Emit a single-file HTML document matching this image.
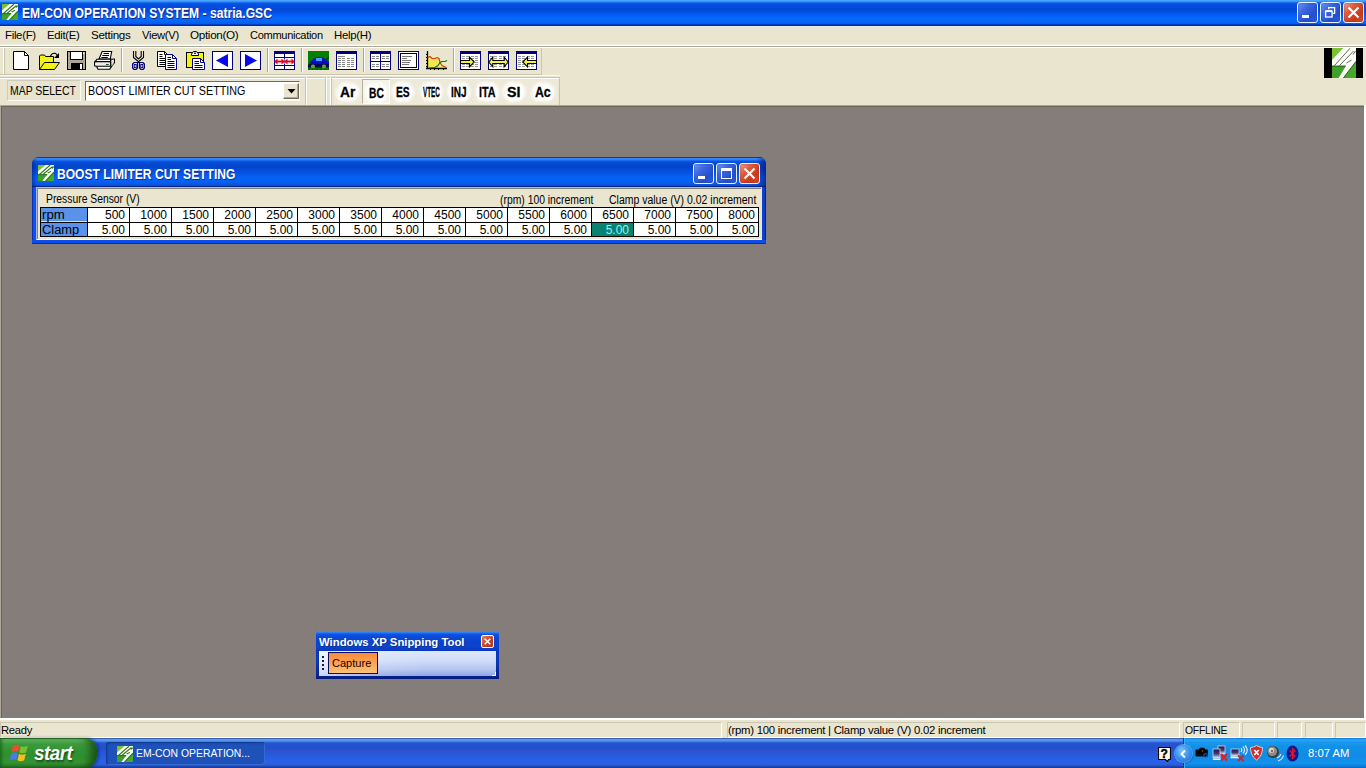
<!DOCTYPE html>
<html><head><meta charset="utf-8"><title>EM-CON OPERATION SYSTEM - satria.GSC</title>
<style>
*{box-sizing:border-box;margin:0;padding:0}
html,body{width:1366px;height:768px;overflow:hidden;background:#857d79;font-family:"Liberation Sans","DejaVu Sans",sans-serif;font-size:11px;color:#000}
div,span,svg{position:absolute}
span{white-space:nowrap;line-height:1;transform-origin:0 0}
.xpgrad{background:linear-gradient(to bottom,#4aa4ff 0.0%,#4aa4ff 3.8%,#2a82f6 7.7%,#0a5ae6 11.5%,#0452e2 15.4%,#034cdc 23.1%,#0349d9 38.5%,#0350e4 46.2%,#045cf4 57.7%,#0668fc 69.2%,#0766f8 80.8%,#0860ee 88.5%,#0858e0 92.3%,#0640c0 94.2%,#002e98 96.9%,#002e98 100.0%)}
#titlebar{left:0;top:0;width:1366px;height:26px}
.ttl{font-weight:bold;color:#fff;text-shadow:1px 1px 0 #0f2a8f}
.wbtn{width:21px;height:21px;border:1px solid #e4f4ff;border-radius:3px;background:linear-gradient(135deg,#6f97f5 0%,#3a66e0 35%,#2450cf 70%,#2c5cdc 100%);box-shadow:inset 0 0 2px rgba(20,40,140,.6)}
.wbtn.close{background:linear-gradient(135deg,#f0a088 0%,#e0593a 35%,#c93a18 70%,#d94d2c 100%);box-shadow:inset 0 0 2px rgba(120,30,10,.6)}
#menubar{left:0;top:26px;width:1366px;height:19px;background:#eae5cf;border-top:1px solid #e8eaf2}
#menubar span{top:3px;font-size:11px;letter-spacing:-0.3px}
#chrome{left:0;top:44px;width:1366px;height:61px;background:#eae5cf}
.hl{background:#fff} .sh{background:#aca899} .sh2{background:#c9c5b2}
#mdi{left:0;top:105px;width:1366px;height:613px;background:#857d79}
#status{left:0;top:718px;width:1366px;height:20px;background:#eae5cf;border-top:2px solid #fff}
.pane{top:2px;height:16px;border:1px solid;border-color:#c8c5b4 #fff #fff #c8c5b4}
#status span{font-size:11px;letter-spacing:-0.25px}
#taskbar{left:0;top:738px;width:1366px;height:30px;background:linear-gradient(to bottom,#3a62aa 0.0%,#3a62aa 3.3%,#5a98f4 4.0%,#5593f2 10.0%,#356ee0 13.3%,#2455cf 16.7%,#2450cb 30.0%,#2a4fcc 36.7%,#2856d6 46.7%,#295ce0 63.3%,#2a62e8 80.0%,#2a5edc 88.3%,#2650c4 93.3%,#1a3c9c 96.7%,#1a3c9c 100.0%)}
#tray{left:1183px;top:0;width:183px;height:30px;background:linear-gradient(to bottom,#0f70d8 0%,#29a8f5 6%,#1a98ee 14%,#1290e8 30%,#108ce6 60%,#1292ec 85%,#0e7cd6 95%,#0b68bf 100%);border-left:1px solid #0b3f9c;box-shadow:inset 1px 0 0 #3fb0f8}
#start{left:0;top:0;width:97px;height:30px;border-radius:0 12px 12px 0;background:linear-gradient(to bottom,#2c742c 0%,#2c742c 3%,#62bc62 5%,#52ae52 12%,#3d9c3d 20%,#339333 40%,#2f8f2f 60%,#359735 82%,#2f862f 92%,#256e25 100%);box-shadow:inset -8px 0 9px -2px rgba(15,60,15,.75),inset 3px 0 3px -1px rgba(15,70,15,.5),2px 0 3px rgba(10,30,120,.5)}
</style><style>.g12{font-size:12px}.r{text-align:right}</style></head><body>
<div id="titlebar" class="xpgrad"><svg style="left:2px;top:4px" width="16" height="16" viewBox="8 0 24 30" preserveAspectRatio="none"><rect x="8" y="0" width="24" height="30" fill="#44aa2a"/><path d="M8 0H19.300L8 11.700Z" fill="#78c236"/><path d="M8 18H22V30H8Z" fill="#3ea228"/><path d="M19.300 0H32V13.300L19.300 30H14.600L21.900 18H8V11.700Z" fill="#fdfff8"/><path d="M26 0.300L10.400 17.700M29.600 3L15.400 17.700M8 18H21.900M27.500 12L22.500 15M32 13.300L19.300 30M31.500 3L29 6.500" stroke="#2f7a1c" stroke-width="2" fill="none"/></svg><span class="ttl" id="maintitle" style="transform:scaleX(0.8670);left:21.5px;top:6px;font-size:14px">EM-CON OPERATION SYSTEM - satria.GSC</span><div class="wbtn" style="left:1297px;top:2px"><div style="left:4px;top:12px;width:7px;height:3px;background:#fff"></div></div><div class="wbtn" style="left:1320px;top:2px"><svg width="19" height="19" style="left:0;top:0"><path d="M7.7 6.3V4.6H13.6V10.300H11.800" stroke="#fff" stroke-width="1.300" fill="none"/><rect x="4.600" y="8.400" width="6.500" height="5.600" stroke="#fff" stroke-width="1.300" fill="none"/><path d="M4.600 8H11.100" stroke="#fff" stroke-width="1.800"/></svg></div><div class="wbtn close" style="left:1343px;top:2px"><svg width="19" height="19" style="left:0;top:0"><path d="M4.5 4.5L14.5 14.5M14.5 4.5L4.5 14.5" stroke="#fff" stroke-width="2.2" fill="none"/></svg></div></div>
<div id="menubar"><span style="left:5px;transform:scaleX(1.0380)">File(F)</span><span style="left:47px;transform:scaleX(1.0276)">Edit(E)</span><span style="left:91px;transform:scaleX(1.0573)">Settings</span><span style="left:142px;transform:scaleX(1.0188)">View(V)</span><span style="left:190px;transform:scaleX(1.0615)">Option(O)</span><span style="left:250px;transform:scaleX(1.0037)">Communication</span><span style="left:334px;transform:scaleX(1.0392)">Help(H)</span></div>
<div id="chrome"><div style="left:0;top:0;width:1366px;height:1px;background:#f1efe2"></div><div class="hl" style="left:0;top:1px;width:1366px;height:1px"></div><div class="sh" style="left:0;top:2px;width:1366px;height:1px"></div><div class="hl" style="left:0;top:3px;width:1366px;height:1px"></div><div class="sh2" style="left:0;top:30px;width:542px;height:1px"></div><div class="sh2" style="left:541px;top:4px;width:1px;height:27px"></div><div style="left:0;top:31px;width:560px;height:1px;background:#fbf9ee"></div><div class="sh2" style="left:0;top:33px;width:560px;height:1px"></div><div class="hl" style="left:0;top:34px;width:559px;height:1px"></div><div class="sh2" style="left:559px;top:33px;width:1px;height:28px"></div><div class="sh2" style="left:4px;top:4px;width:1px;height:26px"></div><div class="hl" style="left:3px;top:4px;width:1px;height:26px"></div><div class="sh2" style="left:305px;top:33px;width:1px;height:28px"></div><div class="hl" style="left:306px;top:33px;width:1px;height:28px"></div><div class="sh2" style="left:325px;top:33px;width:1px;height:28px"></div><div class="hl" style="left:326px;top:33px;width:1px;height:28px"></div><div class="hl" style="left:330px;top:33px;width:1px;height:28px"></div><div class="sh2" style="left:331px;top:33px;width:1px;height:28px"></div><div class="sh" style="left:121px;top:4px;width:1px;height:24px"></div><div class="hl" style="left:122px;top:4px;width:1px;height:24px"></div><div class="sh" style="left:267px;top:4px;width:1px;height:24px"></div><div class="hl" style="left:268px;top:4px;width:1px;height:24px"></div><div class="sh" style="left:301px;top:4px;width:1px;height:24px"></div><div class="hl" style="left:302px;top:4px;width:1px;height:24px"></div><div class="sh" style="left:363px;top:4px;width:1px;height:24px"></div><div class="hl" style="left:364px;top:4px;width:1px;height:24px"></div><div class="sh" style="left:453px;top:4px;width:1px;height:24px"></div><div class="hl" style="left:454px;top:4px;width:1px;height:24px"></div></div>
<div id="icons" style="left:0;top:0;width:0;height:0"><svg style="left:13px;top:51px" width="16" height="19" viewBox="0 0 16 19"><path d="M0.5 0.5H11.5L15.5 4.5V18.5H0.5Z" fill="#fff" stroke="#000"/><path d="M11.5 0.5V4.5H15.5" fill="none" stroke="#000"/></svg><svg style="left:39px;top:52px" width="21" height="18" viewBox="0 0 21 18"><path d="M0.5 17.5V4L1.5 3H5.5L6.5 4.5H14.5V10.5" fill="#f2f214" stroke="#000"/><path d="M0.5 17.5L5.5 10.5H20.5L15.5 17.5Z" fill="#f2f214" stroke="#000"/><path d="M11.5 4Q13 0.8 16 1.3Q18 2 18.5 4" fill="none" stroke="#000" stroke-width="1.2"/><path d="M20 1V6H15Z" fill="#000"/></svg><svg style="left:67px;top:51px" width="19" height="19" viewBox="0 0 19 19"><rect x="0.5" y="0.5" width="18" height="18" fill="#aca698" stroke="#000"/><rect x="3.5" y="0.5" width="12" height="8" fill="#fff" stroke="#000"/><rect x="16" y="1.5" width="1.5" height="1.5" fill="#fff"/><rect x="4" y="12" width="12" height="7" fill="#000"/><rect x="13" y="13" width="2" height="5" fill="#fff"/></svg><svg style="left:94px;top:51px" width="21" height="19" viewBox="0 0 21 19"><path d="M8.200 0.500H17.700L16.200 8H5Z" fill="#fff" stroke="#000" stroke-width="1.100"/><path d="M9.500 2.500H15M8.300 4.500H15M7.300 6.500H13.800" stroke="#000" fill="none"/><path d="M16.600 8.300L20.500 8V11.500L17.200 15.800L16.600 15.200Z" fill="#d8d8d0" stroke="#000" stroke-width="1.100"/><path d="M17.500 10.500L19.500 8.500M17.500 13L20 10M17.500 15L19.500 12.500" stroke="#fff" stroke-width="0.700"/><path d="M1 10.600L3 8.300H16.600V10.600Z" fill="#fff" stroke="#000" stroke-width="1.100"/><path d="M2.500 15.300L4 18.300H15.800L17.200 15.500" fill="#fff" stroke="#000" stroke-width="1.100"/><rect x="0.500" y="10.600" width="16.200" height="4.700" rx="1.300" fill="#ecece4" stroke="#000" stroke-width="1.100"/><path d="M12 13.500H14.700" stroke="#1c4c2c" stroke-width="1"/></svg><svg style="left:132px;top:51px" width="14" height="19" viewBox="0 0 14 19"><path d="M1.500 0V6.500L8 12M3.800 0V5.500L6.500 8M11.500 0V6.500L5 12M9.200 0V5.500L6.500 8" fill="none" stroke="#000" stroke-width="1.100"/><path d="M5.500 11.500H2L0.600 13V17L2 18.500H4L5.500 17ZM7.500 11.500H11L12.400 13V17L11 18.500H9L7.500 17Z" fill="none" stroke="#000080" stroke-width="1.200"/><rect x="2.200" y="13.500" width="2" height="3.200" fill="none" stroke="#000080" stroke-width="0.900"/><rect x="8.800" y="13.500" width="2" height="3.200" fill="none" stroke="#000080" stroke-width="0.900"/></svg><svg style="left:157px;top:51px" width="20" height="19" viewBox="0 0 20 19"><path d="M0.5 0.5H7.5L10.5 3.5V15.5H0.5Z" fill="#fff" stroke="#000"/><path d="M7.5 0.5V3.5H10.5" fill="none" stroke="#000"/><path d="M2.5 3.5H5.5M2.5 5.5H5.5M2.5 7.5H8M2.5 9.5H8M2.5 11.5H8M2.5 13.5H8" stroke="#000"/><path d="M8.5 3.5H15.5L19.5 7.5V18.5H8.5Z" fill="#fff" stroke="#000080"/><path d="M15.5 3.5V7.5H19.5" fill="none" stroke="#000080"/><path d="M10.5 6.5H14M10.5 8.5H14M10.5 10.5H17.5M10.5 12.5H17.5M10.5 14.5H17.5M10.5 16.5H17.5" stroke="#000"/></svg><svg style="left:186px;top:51px" width="19" height="19" viewBox="0 0 19 19"><rect x="0.5" y="1.5" width="17" height="15" fill="#f2f214" stroke="#000"/><path d="M5.5 4.5V3L7.5 0.5H10.5L12.5 3V4.5Z" fill="#fff" stroke="#000"/><rect x="8.2" y="1.6" width="1.6" height="1.4" fill="#000"/><path d="M6.5 7.5H14.5L18.5 11.5V18.5H6.5Z" fill="#fff" stroke="#000080"/><path d="M14.5 7.5V11.5H18.5" fill="none" stroke="#000080"/><path d="M8.5 10.5H13M8.5 12.5H13M8.5 14.5H16.5M8.5 16.5H16.5" stroke="#000080"/></svg><svg style="left:212px;top:51px" width="21" height="19" viewBox="0 0 21 19"><rect x="0.5" y="0.5" width="20" height="18" fill="#fff" stroke="#000080"/><path d="M4 9.5L16 3V16Z" fill="#0808f0"/></svg><svg style="left:240px;top:51px" width="21" height="19" viewBox="0 0 21 19"><rect x="0.5" y="0.5" width="20" height="18" fill="#fff" stroke="#000080"/><path d="M17 9.5L5 3V16Z" fill="#0808f0"/></svg><svg style="left:274px;top:51px" width="21" height="19" viewBox="0 0 21 19"><rect x="0.5" y="0.5" width="20" height="18" fill="#fff" stroke="#000080"/><rect x="0" y="0" width="21" height="3" fill="#000080"/><path d="M10.5 0V19M0 6.5H21M0 14.5H21" stroke="#000080"/><rect x="1" y="8" width="19" height="5" fill="#ffd8d0" opacity="0.600"/><path d="M0.500 10.500H20.500" stroke="#e00020" stroke-width="1.800"/><path d="M0.500 10.500L3.500 7.500V13.500ZM10.500 10.500L7.500 7.500V13.500ZM10.500 10.500L13.500 7.500V13.500ZM20.500 10.500L17.500 7.500V13.500Z" fill="#e00020"/></svg><svg style="left:308px;top:51px" width="21" height="19" viewBox="0 0 21 19"><rect width="21" height="19" fill="#008000"/><path d="M0 15L2 11Q5 7.500 8 6.500Q11 5 15 6.500Q18 8.500 21 11V16H0Z" fill="#0a0ac4"/><path d="M0 13H21V16.500H0Z" fill="#000a58"/><path d="M0 14.500L3 10" stroke="#005800" stroke-width="1" fill="none"/><path d="M18 9L21 6" stroke="#003000" stroke-width="1.200"/><rect x="8" y="7" width="6" height="3" fill="#36a6ff"/><circle cx="5" cy="15.500" r="2" fill="#86a636"/><circle cx="16" cy="15.500" r="2" fill="#86a636"/><circle cx="5" cy="15.500" r="0.800" fill="#607828"/><circle cx="16" cy="15.500" r="0.800" fill="#607828"/><path d="M0 18H21" stroke="#0a5a0a" stroke-width="1.500" stroke-dasharray="2 2"/></svg><svg style="left:336px;top:51px" width="21" height="19" viewBox="0 0 21 19"><rect x="0.5" y="0.5" width="20" height="18" fill="#fff" stroke="#000080"/><rect width="21" height="3" fill="#000080"/><rect x="2" y="5" width="7" height="1" fill="#888"/><rect x="2" y="7" width="3" height="1" fill="#888"/><rect x="6" y="7" width="3" height="1" fill="#888"/><rect x="11" y="7" width="3" height="1" fill="#888"/><rect x="15" y="7" width="3" height="1" fill="#888"/><rect x="2" y="9" width="3" height="1" fill="#888"/><rect x="6" y="9" width="3" height="1" fill="#888"/><rect x="11" y="9" width="3" height="1" fill="#888"/><rect x="15" y="9" width="3" height="1" fill="#888"/><rect x="2" y="11" width="3" height="1" fill="#888"/><rect x="6" y="11" width="3" height="1" fill="#888"/><rect x="11" y="11" width="3" height="1" fill="#888"/><rect x="15" y="11" width="3" height="1" fill="#888"/><rect x="2" y="13" width="3" height="1" fill="#888"/><rect x="6" y="13" width="3" height="1" fill="#888"/><rect x="11" y="13" width="3" height="1" fill="#888"/><rect x="15" y="13" width="3" height="1" fill="#888"/><rect x="2" y="15" width="3" height="1" fill="#888"/><rect x="6" y="15" width="3" height="1" fill="#888"/><rect x="11" y="15" width="3" height="1" fill="#888"/><rect x="15" y="15" width="3" height="1" fill="#888"/></svg><svg style="left:370px;top:51px" width="21" height="19" viewBox="0 0 21 19"><rect x="0.5" y="0.5" width="20" height="18" fill="#fff" stroke="#000080"/><rect width="21" height="3" fill="#000080"/><path d="M10.5 0V19M0 10.5H21" stroke="#000080"/><rect x="2" y="5" width="3" height="1" fill="#888"/><rect x="6" y="5" width="3" height="1" fill="#888"/><rect x="12" y="5" width="3" height="1" fill="#888"/><rect x="16" y="5" width="3" height="1" fill="#888"/><rect x="2" y="7" width="3" height="1" fill="#888"/><rect x="6" y="7" width="3" height="1" fill="#888"/><rect x="12" y="7" width="3" height="1" fill="#888"/><rect x="16" y="7" width="3" height="1" fill="#888"/><rect x="2" y="13" width="3" height="1" fill="#888"/><rect x="6" y="13" width="3" height="1" fill="#888"/><rect x="12" y="13" width="3" height="1" fill="#888"/><rect x="16" y="13" width="3" height="1" fill="#888"/><rect x="2" y="15" width="3" height="1" fill="#888"/><rect x="6" y="15" width="3" height="1" fill="#888"/><rect x="12" y="15" width="3" height="1" fill="#888"/><rect x="16" y="15" width="3" height="1" fill="#888"/></svg><svg style="left:398px;top:51px" width="21" height="19" viewBox="0 0 21 19"><rect x="0.5" y="0.5" width="20" height="18" fill="#fff" stroke="#000080"/><rect x="2.5" y="2.5" width="16" height="14" fill="#fff" stroke="#000"/><path d="M4 5.5H14M4 7.5H9M4 9.5H13M4 11.5H12M4 13.5H11" stroke="#777"/></svg><svg style="left:426px;top:51px" width="22" height="19" viewBox="0 0 22 19"><path d="M2 6L4 5L6 7H9L11 6L13 7L14 11L16 14L18 15L20 16V17.5H2Z" fill="#f4e440" opacity=".9"/><path d="M12 11L15 10H20V17H12Z" fill="#f8e8a0" opacity=".6"/><path d="M1.5 0V18M0 17.5H21" stroke="#000" stroke-width="1.3" fill="none"/><path d="M0 3.5H1.5M0 6.5H1.5M0 9.500H1.5M0 12.500H1.5M0 15.500H1.5M4.500 17.500V19M8.500 17.500V19M12.500 17.500V19M17.500 17.500V19" stroke="#000"/><path d="M1.500 6.500L4 5.500L6 7.500H9L11 6.500L13 7.500L14 11.500L16 14.500L18 15.500L20.500 16.500" fill="none" stroke="#e03010" stroke-width="1.1"/><path d="M3 17L9 16.500L12 14.500L14 11.500L16 10.500H19L21 9.500" fill="none" stroke="#107020" stroke-width="1.1"/></svg><svg style="left:460px;top:51px" width="21" height="19" viewBox="0 0 21 19"><rect x="0.5" y="0.5" width="20" height="18" fill="#fff" stroke="#000080"/><rect width="21" height="3" fill="#000080"/><rect x="2" y="5" width="3" height="1" fill="#999"/><rect x="6" y="5" width="3" height="1" fill="#999"/><rect x="11" y="5" width="3" height="1" fill="#999"/><rect x="15" y="5" width="3" height="1" fill="#999"/><rect x="2" y="7" width="3" height="1" fill="#999"/><rect x="6" y="7" width="3" height="1" fill="#999"/><rect x="11" y="7" width="3" height="1" fill="#999"/><rect x="15" y="7" width="3" height="1" fill="#999"/><rect x="2" y="9" width="3" height="1" fill="#999"/><rect x="6" y="9" width="3" height="1" fill="#999"/><rect x="11" y="9" width="3" height="1" fill="#999"/><rect x="15" y="9" width="3" height="1" fill="#999"/><rect x="2" y="11" width="3" height="1" fill="#999"/><rect x="6" y="11" width="3" height="1" fill="#999"/><rect x="11" y="11" width="3" height="1" fill="#999"/><rect x="15" y="11" width="3" height="1" fill="#999"/><rect x="2" y="13" width="3" height="1" fill="#999"/><rect x="6" y="13" width="3" height="1" fill="#999"/><rect x="11" y="13" width="3" height="1" fill="#999"/><rect x="15" y="13" width="3" height="1" fill="#999"/><rect x="2" y="15" width="3" height="1" fill="#999"/><rect x="6" y="15" width="3" height="1" fill="#999"/><rect x="11" y="15" width="3" height="1" fill="#999"/><rect x="15" y="15" width="3" height="1" fill="#999"/><path d="M0.500 9.500H9.500V6.200L14.200 11L9.500 15.800V12.500H0.500Z" fill="#f2f24a" stroke="#000" stroke-width="1.100"/></svg><svg style="left:488px;top:51px" width="21" height="19" viewBox="0 0 21 19"><rect x="0.5" y="0.5" width="20" height="18" fill="#fff" stroke="#000080"/><rect width="21" height="3" fill="#000080"/><rect x="2" y="5" width="3" height="1" fill="#999"/><rect x="6" y="5" width="3" height="1" fill="#999"/><rect x="11" y="5" width="3" height="1" fill="#999"/><rect x="15" y="5" width="3" height="1" fill="#999"/><rect x="2" y="7" width="3" height="1" fill="#999"/><rect x="6" y="7" width="3" height="1" fill="#999"/><rect x="11" y="7" width="3" height="1" fill="#999"/><rect x="15" y="7" width="3" height="1" fill="#999"/><rect x="2" y="9" width="3" height="1" fill="#999"/><rect x="6" y="9" width="3" height="1" fill="#999"/><rect x="11" y="9" width="3" height="1" fill="#999"/><rect x="15" y="9" width="3" height="1" fill="#999"/><rect x="2" y="11" width="3" height="1" fill="#999"/><rect x="6" y="11" width="3" height="1" fill="#999"/><rect x="11" y="11" width="3" height="1" fill="#999"/><rect x="15" y="11" width="3" height="1" fill="#999"/><rect x="2" y="13" width="3" height="1" fill="#999"/><rect x="6" y="13" width="3" height="1" fill="#999"/><rect x="11" y="13" width="3" height="1" fill="#999"/><rect x="15" y="13" width="3" height="1" fill="#999"/><rect x="2" y="15" width="3" height="1" fill="#999"/><rect x="6" y="15" width="3" height="1" fill="#999"/><rect x="11" y="15" width="3" height="1" fill="#999"/><rect x="15" y="15" width="3" height="1" fill="#999"/><path d="M0.800 11L4.800 6.200V9.500H16.200V6.200L20.200 11L16.200 15.800V12.500H4.800V15.800Z" fill="#f2f24a" stroke="#000" stroke-width="1.100"/></svg><svg style="left:516px;top:51px" width="21" height="19" viewBox="0 0 21 19"><rect x="0.5" y="0.5" width="20" height="18" fill="#fff" stroke="#000080"/><rect width="21" height="3" fill="#000080"/><rect x="2" y="5" width="3" height="1" fill="#999"/><rect x="6" y="5" width="3" height="1" fill="#999"/><rect x="11" y="5" width="3" height="1" fill="#999"/><rect x="15" y="5" width="3" height="1" fill="#999"/><rect x="2" y="7" width="3" height="1" fill="#999"/><rect x="6" y="7" width="3" height="1" fill="#999"/><rect x="11" y="7" width="3" height="1" fill="#999"/><rect x="15" y="7" width="3" height="1" fill="#999"/><rect x="2" y="9" width="3" height="1" fill="#999"/><rect x="6" y="9" width="3" height="1" fill="#999"/><rect x="11" y="9" width="3" height="1" fill="#999"/><rect x="15" y="9" width="3" height="1" fill="#999"/><rect x="2" y="11" width="3" height="1" fill="#999"/><rect x="6" y="11" width="3" height="1" fill="#999"/><rect x="11" y="11" width="3" height="1" fill="#999"/><rect x="15" y="11" width="3" height="1" fill="#999"/><rect x="2" y="13" width="3" height="1" fill="#999"/><rect x="6" y="13" width="3" height="1" fill="#999"/><rect x="11" y="13" width="3" height="1" fill="#999"/><rect x="15" y="13" width="3" height="1" fill="#999"/><rect x="2" y="15" width="3" height="1" fill="#999"/><rect x="6" y="15" width="3" height="1" fill="#999"/><rect x="11" y="15" width="3" height="1" fill="#999"/><rect x="15" y="15" width="3" height="1" fill="#999"/><path d="M20.500 9.500H11.500V6.200L6.800 11L11.500 15.800V12.500H20.500Z" fill="#f2f24a" stroke="#000" stroke-width="1.100"/></svg><svg style="left:1324px;top:48px" width="39" height="30" viewBox="0 0 39 30"><rect width="39" height="30" fill="#000"/><rect x="8" y="0" width="24" height="30" fill="#44aa2a"/><path d="M8 0H19.300L8 11.700Z" fill="#78c236"/><path d="M8 18H22V30H8Z" fill="#3ea228"/><path d="M19.300 0H32V13.300L19.300 30H14.600L21.900 18H8V11.700Z" fill="#fdfff8"/><path d="M26 0.300L10.400 17.700M29.600 3L15.400 17.700M8 18H21.900M27.500 12L22.500 15M32 13.300L19.300 30M31.500 3L29 6.500" stroke="#18280f" stroke-width="0.700" fill="none"/></svg></div>
<div id="mdi"><div style="left:0;top:0;width:1364px;height:1px;background:#aca899"></div><div style="left:1px;top:1px;width:1363px;height:1px;background:#6b6558"></div><div style="left:0;top:0;width:1px;height:613px;background:#aca899"></div><div style="left:1px;top:1px;width:1px;height:612px;background:#6b6558"></div><div style="left:1364px;top:0;width:2px;height:613px;background:#fff"></div></div>
<div id="tb2w" style="left:0;top:0;width:0;height:0"><div style="left:7px;top:80px;width:74px;height:21px;border:1px solid;border-color:#cfcbb8 #fdfcf4 #fdfcf4 #cfcbb8;background:#e8e3cd"></div><span id="mapsel" style="transform:scaleX(0.8706);left:10px;top:84.6px;font-size:12px">MAP SELECT</span><div style="left:85px;top:81px;width:215px;height:20px;background:#fff;border:1px solid;border-color:#6f6b5e #fbf9f0 #fbf9f0 #6f6b5e"></div><span id="combo" style="transform:scaleX(0.8965);left:88px;top:84.6px;font-size:12px">BOOST LIMITER CUT SETTING</span><div style="left:283px;top:83px;width:16px;height:16px;background:#eae5cf;border:1px solid;border-color:#fff #6f6c5f #6f6c5f #fff;box-shadow:inset -1px -1px 0 #aca899"></div><svg style="left:287px;top:89px" width="9" height="5" viewBox="0 0 9 5"><path d="M0.5 0H8.500L4.500 4.500Z" fill="#000"/></svg><div style="left:334px;top:79px;width:224px;height:25px;background:rgba(255,255,255,.22)"></div><div style="left:362px;top:79px;width:28px;height:25px;border:1px solid;border-color:#b5b1a0 #fff #fff #b5b1a0;background:#f6f4ea"></div><div style="left:333.8px;top:80px;width:28px;height:23px;background:radial-gradient(ellipse closest-side,rgba(255,255,255,.85) 0%,rgba(255,255,255,.8) 55%,rgba(255,255,255,.3) 82%,rgba(255,255,255,0) 100%)"></div><span class="tbt" style="transform:scaleX(0.8878);left:340px;top:83.8px;font-size:15.5px;font-weight:bold;-webkit-text-stroke:0.3px #000;text-shadow:1px 0px 1px #fff,-1px 0px 1px #fff,0px 1px 1px #fff,0px -1px 1px #fff,2px 0px 1px #fff,-2px 0px 1px #fff,0px 2px 1px #fff,0px -2px 1px #fff,2px 2px 1px #fff,-2px 2px 1px #fff,2px -2px 1px #fff,-2px -2px 1px #fff,3px 0px 2px #fff,-3px 0px 2px #fff,0px 3px 2px #fff,0px -3px 2px #fff,3px 3px 2px #fff,-3px 3px 2px #fff,3px -3px 2px #fff,-3px -3px 2px #fff,5px 0px 3px #fff,-5px 0px 3px #fff,0px 5px 3px #fff,0px -5px 3px #fff">Ar</span><div style="left:362.2px;top:81px;width:28px;height:23px;background:radial-gradient(ellipse closest-side,rgba(255,255,255,.85) 0%,rgba(255,255,255,.8) 55%,rgba(255,255,255,.3) 82%,rgba(255,255,255,0) 100%)"></div><span class="tbt" style="transform:scaleX(0.6610);left:368.5px;top:84.8px;font-size:15.5px;font-weight:bold;-webkit-text-stroke:0.3px #000;text-shadow:1px 0px 1px #fff,-1px 0px 1px #fff,0px 1px 1px #fff,0px -1px 1px #fff,2px 0px 1px #fff,-2px 0px 1px #fff,0px 2px 1px #fff,0px -2px 1px #fff,2px 2px 1px #fff,-2px 2px 1px #fff,2px -2px 1px #fff,-2px -2px 1px #fff,3px 0px 2px #fff,-3px 0px 2px #fff,0px 3px 2px #fff,0px -3px 2px #fff,3px 3px 2px #fff,-3px 3px 2px #fff,3px -3px 2px #fff,-3px -3px 2px #fff,5px 0px 3px #fff,-5px 0px 3px #fff,0px 5px 3px #fff,0px -5px 3px #fff">BC</span><div style="left:389.1px;top:80px;width:28px;height:23px;background:radial-gradient(ellipse closest-side,rgba(255,255,255,.85) 0%,rgba(255,255,255,.8) 55%,rgba(255,255,255,.3) 82%,rgba(255,255,255,0) 100%)"></div><span class="tbt" style="transform:scaleX(0.6622);left:395.8px;top:83.8px;font-size:15.5px;font-weight:bold;-webkit-text-stroke:0.3px #000;text-shadow:1px 0px 1px #fff,-1px 0px 1px #fff,0px 1px 1px #fff,0px -1px 1px #fff,2px 0px 1px #fff,-2px 0px 1px #fff,0px 2px 1px #fff,0px -2px 1px #fff,2px 2px 1px #fff,-2px 2px 1px #fff,2px -2px 1px #fff,-2px -2px 1px #fff,3px 0px 2px #fff,-3px 0px 2px #fff,0px 3px 2px #fff,0px -3px 2px #fff,3px 3px 2px #fff,-3px 3px 2px #fff,3px -3px 2px #fff,-3px -3px 2px #fff,5px 0px 3px #fff,-5px 0px 3px #fff,0px 5px 3px #fff,0px -5px 3px #fff">ES</span><div style="left:417.6px;top:80px;width:28px;height:23px;background:radial-gradient(ellipse closest-side,rgba(255,255,255,.85) 0%,rgba(255,255,255,.8) 55%,rgba(255,255,255,.3) 82%,rgba(255,255,255,0) 100%)"></div><span class="tbt" style="transform:scaleX(0.4088);left:422.8px;top:83.8px;font-size:15.5px;font-weight:bold;-webkit-text-stroke:0.3px #000;text-shadow:1px 0px 1px #fff,-1px 0px 1px #fff,0px 1px 1px #fff,0px -1px 1px #fff,2px 0px 1px #fff,-2px 0px 1px #fff,0px 2px 1px #fff,0px -2px 1px #fff,2px 2px 1px #fff,-2px 2px 1px #fff,2px -2px 1px #fff,-2px -2px 1px #fff,3px 0px 2px #fff,-3px 0px 2px #fff,0px 3px 2px #fff,0px -3px 2px #fff,3px 3px 2px #fff,-3px 3px 2px #fff,3px -3px 2px #fff,-3px -3px 2px #fff,5px 0px 3px #fff,-5px 0px 3px #fff,0px 5px 3px #fff,0px -5px 3px #fff">VTEC</span><div style="left:445.0px;top:80px;width:28px;height:23px;background:radial-gradient(ellipse closest-side,rgba(255,255,255,.85) 0%,rgba(255,255,255,.8) 55%,rgba(255,255,255,.3) 82%,rgba(255,255,255,0) 100%)"></div><span class="tbt" style="transform:scaleX(0.6466);left:450.9px;top:83.8px;font-size:15.5px;font-weight:bold;-webkit-text-stroke:0.3px #000;text-shadow:1px 0px 1px #fff,-1px 0px 1px #fff,0px 1px 1px #fff,0px -1px 1px #fff,2px 0px 1px #fff,-2px 0px 1px #fff,0px 2px 1px #fff,0px -2px 1px #fff,2px 2px 1px #fff,-2px 2px 1px #fff,2px -2px 1px #fff,-2px -2px 1px #fff,3px 0px 2px #fff,-3px 0px 2px #fff,0px 3px 2px #fff,0px -3px 2px #fff,3px 3px 2px #fff,-3px 3px 2px #fff,3px -3px 2px #fff,-3px -3px 2px #fff,5px 0px 3px #fff,-5px 0px 3px #fff,0px 5px 3px #fff,0px -5px 3px #fff">INJ</span><div style="left:473.6px;top:80px;width:28px;height:23px;background:radial-gradient(ellipse closest-side,rgba(255,255,255,.85) 0%,rgba(255,255,255,.8) 55%,rgba(255,255,255,.3) 82%,rgba(255,255,255,0) 100%)"></div><span class="tbt" style="transform:scaleX(0.6925);left:479px;top:83.8px;font-size:15.5px;font-weight:bold;-webkit-text-stroke:0.3px #000;text-shadow:1px 0px 1px #fff,-1px 0px 1px #fff,0px 1px 1px #fff,0px -1px 1px #fff,2px 0px 1px #fff,-2px 0px 1px #fff,0px 2px 1px #fff,0px -2px 1px #fff,2px 2px 1px #fff,-2px 2px 1px #fff,2px -2px 1px #fff,-2px -2px 1px #fff,3px 0px 2px #fff,-3px 0px 2px #fff,0px 3px 2px #fff,0px -3px 2px #fff,3px 3px 2px #fff,-3px 3px 2px #fff,3px -3px 2px #fff,-3px -3px 2px #fff,5px 0px 3px #fff,-5px 0px 3px #fff,0px 5px 3px #fff,0px -5px 3px #fff">ITA</span><div style="left:500.2px;top:80px;width:28px;height:23px;background:radial-gradient(ellipse closest-side,rgba(255,255,255,.85) 0%,rgba(255,255,255,.8) 55%,rgba(255,255,255,.3) 82%,rgba(255,255,255,0) 100%)"></div><span class="tbt" style="transform:scaleX(0.9211);left:507.1px;top:83.8px;font-size:15.5px;font-weight:bold;-webkit-text-stroke:0.3px #000;text-shadow:1px 0px 1px #fff,-1px 0px 1px #fff,0px 1px 1px #fff,0px -1px 1px #fff,2px 0px 1px #fff,-2px 0px 1px #fff,0px 2px 1px #fff,0px -2px 1px #fff,2px 2px 1px #fff,-2px 2px 1px #fff,2px -2px 1px #fff,-2px -2px 1px #fff,3px 0px 2px #fff,-3px 0px 2px #fff,0px 3px 2px #fff,0px -3px 2px #fff,3px 3px 2px #fff,-3px 3px 2px #fff,3px -3px 2px #fff,-3px -3px 2px #fff,5px 0px 3px #fff,-5px 0px 3px #fff,0px 5px 3px #fff,0px -5px 3px #fff">SI</span><div style="left:529.2px;top:80px;width:28px;height:23px;background:radial-gradient(ellipse closest-side,rgba(255,255,255,.85) 0%,rgba(255,255,255,.8) 55%,rgba(255,255,255,.3) 82%,rgba(255,255,255,0) 100%)"></div><span class="tbt" style="transform:scaleX(0.7918);left:535.2px;top:83.8px;font-size:15.5px;font-weight:bold;-webkit-text-stroke:0.3px #000;text-shadow:1px 0px 1px #fff,-1px 0px 1px #fff,0px 1px 1px #fff,0px -1px 1px #fff,2px 0px 1px #fff,-2px 0px 1px #fff,0px 2px 1px #fff,0px -2px 1px #fff,2px 2px 1px #fff,-2px 2px 1px #fff,2px -2px 1px #fff,-2px -2px 1px #fff,3px 0px 2px #fff,-3px 0px 2px #fff,0px 3px 2px #fff,0px -3px 2px #fff,3px 3px 2px #fff,-3px 3px 2px #fff,3px -3px 2px #fff,-3px -3px 2px #fff,5px 0px 3px #fff,-5px 0px 3px #fff,0px 5px 3px #fff,0px -5px 3px #fff">Ac</span></div>
<div id="child" style="left:32px;top:157px;width:734px;height:87px;border-radius:7px 7px 0 0;background:#0c4cec;overflow:hidden"><div style="left:0;top:0;width:734px;height:30px;background:linear-gradient(to bottom,#0a3a9c 0.0%,#0a3a9c 3.3%,#3a8af8 4.3%,#2a78f0 10.0%,#0a58e6 13.3%,#044cd6 20.0%,#0344c8 33.3%,#044cd8 43.3%,#0454e4 53.3%,#0560f4 66.7%,#0562f6 80.0%,#0a58e2 90.0%,#0a4cd0 95.0%,#002a90 97.3%,#002a90 100.0%)"></div><div style="left:0;top:30px;width:4px;height:57px;background:linear-gradient(to right,#0a30b0 0%,#0a30b0 20%,#0c52f0 30%,#0c50ee 100%)"></div><div style="left:730px;top:30px;width:4px;height:57px;background:linear-gradient(to left,#001f9c 0%,#001f9c 22%,#0a3cc8 30%,#0b44d8 100%)"></div><div style="left:0;top:83px;width:734px;height:4px;background:linear-gradient(to bottom,#0c4cec 0%,#0c4cec 70%,#0a2ca8 78%,#0a2ca8 100%)"></div><div style="left:0;top:0;width:734px;height:30px;background:linear-gradient(to right,rgba(0,20,120,.45) 0,rgba(0,20,120,0) 5px,rgba(0,20,120,0) 724px,rgba(0,10,100,.55) 734px)"></div><svg style="left:6px;top:8px" width="16" height="16" viewBox="8 0 24 30" preserveAspectRatio="none"><rect x="8" y="0" width="24" height="30" fill="#44aa2a"/><path d="M8 0H19.300L8 11.700Z" fill="#78c236"/><path d="M8 18H22V30H8Z" fill="#3ea228"/><path d="M19.300 0H32V13.300L19.300 30H14.600L21.900 18H8V11.700Z" fill="#fdfff8"/><path d="M26 0.300L10.400 17.700M29.600 3L15.400 17.700M8 18H21.900M27.500 12L22.500 15M32 13.300L19.300 30M31.500 3L29 6.500" stroke="#2f7a1c" stroke-width="2" fill="none"/></svg><span class="ttl" id="childtitle" style="transform:scaleX(0.8623);left:25px;top:10px;font-size:14px">BOOST LIMITER CUT SETTING</span><div class="wbtn" style="left:661px;top:6px"><div style="left:4px;top:12px;width:7px;height:3px;background:#fff"></div></div><div class="wbtn" style="left:684px;top:6px"><div style="left:4px;top:4px;width:11px;height:11px;border:1px solid #fff;border-top-width:3px"></div></div><div class="wbtn close" style="left:707px;top:6px"><svg width="19" height="19" style="left:0;top:0"><path d="M4.500 4.500L14.500 14.500M14.500 4.500L4.500 14.500" stroke="#fff" stroke-width="2.200" fill="none"/></svg></div><div style="left:4px;top:30px;width:726px;height:53px;background:#eae5cf;border:1px solid;border-color:#a8b8ee #dfe6fa #fff #a8b8ee"></div><div style="left:5px;top:31px;width:724px;height:1px;background:#85817c"></div><div style="left:5px;top:31px;width:1px;height:51px;background:#85817c"></div><span class="g12" id="ps" style="transform:scaleX(0.8620);left:14px;top:36px">Pressure Sensor (V)</span><span class="g12" id="inc1" style="transform:scaleX(0.8635);left:468px;top:37px">(rpm) 100 increment</span><span class="g12" id="inc2" style="transform:scaleX(0.8729);left:576.5px;top:37px">Clamp value (V) 0.02 increment</span><div id="grid" style="left:8px;top:50px;width:719px;height:30px;background:#000"><div style="left:1px;top:1px;width:46px;height:14px;background:#5a92ea;border-bottom:1px solid #cfe0fa"></div><div style="left:1px;top:16px;width:46px;height:13px;background:#5a92ea"></div><span class="g12" style="left:2.1px;top:2px;transform:scaleX(1.1)">rpm</span><span class="g12" style="left:2.1px;top:17px;transform:scaleX(1.075)">Clamp</span><div style="left:48px;top:1px;width:41px;height:14px;background:#fff"></div><div style="left:48px;top:16px;width:41px;height:13px;background:#fff"></div><span class="g12 r" style="left:48px;top:2px;width:37px">500</span><span class="g12 r" style="left:48px;top:17px;width:37px">5.00</span><div style="left:90px;top:1px;width:41px;height:14px;background:#fff"></div><div style="left:90px;top:16px;width:41px;height:13px;background:#fff"></div><span class="g12 r" style="left:90px;top:2px;width:37px">1000</span><span class="g12 r" style="left:90px;top:17px;width:37px">5.00</span><div style="left:132px;top:1px;width:41px;height:14px;background:#fff"></div><div style="left:132px;top:16px;width:41px;height:13px;background:#fff"></div><span class="g12 r" style="left:132px;top:2px;width:37px">1500</span><span class="g12 r" style="left:132px;top:17px;width:37px">5.00</span><div style="left:174px;top:1px;width:41px;height:14px;background:#fff"></div><div style="left:174px;top:16px;width:41px;height:13px;background:#fff"></div><span class="g12 r" style="left:174px;top:2px;width:37px">2000</span><span class="g12 r" style="left:174px;top:17px;width:37px">5.00</span><div style="left:216px;top:1px;width:41px;height:14px;background:#fff"></div><div style="left:216px;top:16px;width:41px;height:13px;background:#fff"></div><span class="g12 r" style="left:216px;top:2px;width:37px">2500</span><span class="g12 r" style="left:216px;top:17px;width:37px">5.00</span><div style="left:258px;top:1px;width:41px;height:14px;background:#fff"></div><div style="left:258px;top:16px;width:41px;height:13px;background:#fff"></div><span class="g12 r" style="left:258px;top:2px;width:37px">3000</span><span class="g12 r" style="left:258px;top:17px;width:37px">5.00</span><div style="left:300px;top:1px;width:41px;height:14px;background:#fff"></div><div style="left:300px;top:16px;width:41px;height:13px;background:#fff"></div><span class="g12 r" style="left:300px;top:2px;width:37px">3500</span><span class="g12 r" style="left:300px;top:17px;width:37px">5.00</span><div style="left:342px;top:1px;width:41px;height:14px;background:#fff"></div><div style="left:342px;top:16px;width:41px;height:13px;background:#fff"></div><span class="g12 r" style="left:342px;top:2px;width:37px">4000</span><span class="g12 r" style="left:342px;top:17px;width:37px">5.00</span><div style="left:384px;top:1px;width:41px;height:14px;background:#fff"></div><div style="left:384px;top:16px;width:41px;height:13px;background:#fff"></div><span class="g12 r" style="left:384px;top:2px;width:37px">4500</span><span class="g12 r" style="left:384px;top:17px;width:37px">5.00</span><div style="left:426px;top:1px;width:41px;height:14px;background:#fff"></div><div style="left:426px;top:16px;width:41px;height:13px;background:#fff"></div><span class="g12 r" style="left:426px;top:2px;width:37px">5000</span><span class="g12 r" style="left:426px;top:17px;width:37px">5.00</span><div style="left:468px;top:1px;width:41px;height:14px;background:#fff"></div><div style="left:468px;top:16px;width:41px;height:13px;background:#fff"></div><span class="g12 r" style="left:468px;top:2px;width:37px">5500</span><span class="g12 r" style="left:468px;top:17px;width:37px">5.00</span><div style="left:510px;top:1px;width:41px;height:14px;background:#fff"></div><div style="left:510px;top:16px;width:41px;height:13px;background:#fff"></div><span class="g12 r" style="left:510px;top:2px;width:37px">6000</span><span class="g12 r" style="left:510px;top:17px;width:37px">5.00</span><div style="left:552px;top:1px;width:41px;height:14px;background:#fff"></div><div style="left:552px;top:16px;width:41px;height:13px;background:#0a8272"></div><span class="g12 r" style="left:552px;top:2px;width:37px">6500</span><span class="g12 r" style="left:552px;top:17px;width:37px;color:#8ff4f4">5.00</span><div style="left:594px;top:1px;width:41px;height:14px;background:#fff"></div><div style="left:594px;top:16px;width:41px;height:13px;background:#fff"></div><span class="g12 r" style="left:594px;top:2px;width:37px">7000</span><span class="g12 r" style="left:594px;top:17px;width:37px">5.00</span><div style="left:636px;top:1px;width:41px;height:14px;background:#fff"></div><div style="left:636px;top:16px;width:41px;height:13px;background:#fff"></div><span class="g12 r" style="left:636px;top:2px;width:37px">7500</span><span class="g12 r" style="left:636px;top:17px;width:37px">5.00</span><div style="left:678px;top:1px;width:40px;height:14px;background:#fff"></div><div style="left:678px;top:16px;width:40px;height:13px;background:#fff"></div><span class="g12 r" style="left:678px;top:2px;width:37px">8000</span><span class="g12 r" style="left:678px;top:17px;width:37px">5.00</span></div></div>
<div id="snip" style="left:316px;top:631px;width:183px;height:48px;background:linear-gradient(to bottom,#0a3cc4 0%,#0a38bc 60%,#06248e 94%,#041a7c 100%);border-radius:1px 1px 0 0;overflow:hidden"><div style="left:0;top:0;width:183px;height:21px;background:linear-gradient(to bottom,#3a8cf4 0%,#3a8cf4 5%,#2a70ec 9%,#0b54e2 16%,#0a4ad6 30%,#0a42ce 55%,#0a44d0 75%,#0a3cc4 88%,#0a34b8 100%)"></div><span id="sniptitle" style="transform:scaleX(1.0300);left:3px;top:6px;font-size:11px;font-weight:bold;color:#fff;text-shadow:1px 1px 0 #10308f">Windows XP Snipping Tool</span><div style="left:165px;top:4px;width:13px;height:13px;border:1px solid #fff;border-radius:2px;background:linear-gradient(135deg,#e08868,#c8452a 50%,#b03418)"><svg width="11" height="11" style="left:0;top:0"><path d="M2.700 2.700L8.300 8.300M8.300 2.700L2.700 8.300" stroke="#fff" stroke-width="1.500"/></svg></div><div style="left:3px;top:20px;width:177px;height:25px;background:linear-gradient(to bottom,#dfe8fb 0%,#d0dcf8 40%,#b4c4f0 75%,#8ea4e4 100%)"></div><div style="left:3px;top:20px;width:177px;height:25px;background:linear-gradient(to right,rgba(255,255,255,.55) 0%,rgba(255,255,255,.15) 30%,rgba(255,255,255,0) 60%)"></div><div style="left:6px;top:24.5px;width:2px;height:2px;background:#1a1a30"></div><div style="left:6px;top:28.5px;width:2px;height:2px;background:#1a1a30"></div><div style="left:6px;top:32.5px;width:2px;height:2px;background:#1a1a30"></div><div style="left:6px;top:36.5px;width:2px;height:2px;background:#1a1a30"></div><div style="left:12px;top:21px;width:50px;height:22px;border:1px solid #0a0a60;background:linear-gradient(to bottom,#fb8a3c 0%,#fca050 45%,#fdc27a 100%)"></div><span id="capture" style="transform:scaleX(1.0041);left:16px;top:27px;font-size:11px;color:#200000">Capture</span><svg style="left:176px;top:41px" width="4" height="4" viewBox="0 0 4 4"><path d="M3.500 0V3.500H0" stroke="#fff" fill="none"/></svg></div>
<div id="status"><div class="pane" style="left:0px;width:722px"></div><div class="pane" style="left:727px;width:453px"></div><div class="pane" style="left:1183px;width:57px"></div><div class="pane" style="left:1242px;width:33px"></div><div class="pane" style="left:1277px;width:25px"></div><div class="pane" style="left:1305px;width:28px"></div><div class="pane" style="left:1335px;width:31px"></div><span id="ready" style="transform:scaleX(1.0214);left:1px;top:5px">Ready</span><span id="stmsg" style="transform:scaleX(1.0309);left:728px;top:5px">(rpm) 100 increment | Clamp value (V) 0.02 increment</span><span id="offline" style="transform:scaleX(0.9462);left:1184.5px;top:5px">OFFLINE</span></div>
<div id="taskbar"><div id="start"><svg style="left:10px;top:5px" width="20" height="19" viewBox="0 0 20 19"><path d="M3 2.500Q6 0.800 9.500 2.500L8 9Q5 7.500 1.500 9Z" fill="#e8502a"/><path d="M10.800 3Q14 4.800 17.800 2.800L16 9.500Q12.500 11 9.300 9.500Z" fill="#7cc030"/><path d="M1.200 10.300Q4.800 8.800 7.800 10.300L6.200 17Q3 15.500 -0.300 17Z" fill="#4a7ae8"/><path d="M9 10.800Q12 12.500 15.800 10.800L14.200 17.300Q10.800 19 7.500 17.300Z" fill="#f4c020"/></svg><span id="starttxt" style="transform:scaleX(0.9374);left:33.5px;top:5px;font-size:20px;font-weight:bold;font-style:italic;color:#fff;text-shadow:1px 2px 2px rgba(20,60,20,.8);letter-spacing:-0.5px">start</span></div><div style="left:106px;top:4px;width:159px;height:23px;border-radius:3px;background:#1e52b8;box-shadow:inset 1px 1px 2px #12348a,inset -1px -1px 0 #3a6fd8"></div><svg style="left:117px;top:8px" width="16" height="16" viewBox="8 0 24 30" preserveAspectRatio="none"><rect x="8" y="0" width="24" height="30" fill="#44aa2a"/><path d="M8 0H19.300L8 11.700Z" fill="#78c236"/><path d="M8 18H22V30H8Z" fill="#3ea228"/><path d="M19.300 0H32V13.300L19.300 30H14.600L21.900 18H8V11.700Z" fill="#fdfff8"/><path d="M26 0.300L10.400 17.700M29.600 3L15.400 17.700M8 18H21.900M27.500 12L22.500 15M32 13.300L19.300 30M31.500 3L29 6.500" stroke="#2f7a1c" stroke-width="2" fill="none"/></svg><span id="tbtxt" style="transform:scaleX(0.9436);left:136px;top:10px;font-size:11px;color:#fff">EM-CON OPERATION...</span><div id="tray"></div><svg style="left:1158px;top:9px" width="13" height="15" viewBox="0 0 13 15"><path d="M0.500 0.500H12.500V12.500H10.500L9.500 14.500L7.500 12.500H0.500Z" fill="#fffff0" stroke="#000" stroke-width="1.200"/></svg><span style="left:1160.5px;top:9.5px;font-size:12px;font-weight:bold;color:#000;-webkit-text-stroke:0.4px #000">?</span><div style="left:1175px;top:7px;width:17px;height:17px;border-radius:50%;background:radial-gradient(circle at 40% 35%,#7cc4ff 0%,#3a98f0 45%,#1a68d8 100%);box-shadow:0 0 0 1px rgba(120,190,255,.7),1px 1px 2px rgba(0,20,90,.5)"></div><svg style="left:1179px;top:11px" width="8" height="10" viewBox="0 0 8 10"><path d="M6 1.500L2.500 5L6 8.500" stroke="#fff" stroke-width="2" fill="none"/></svg><svg style="left:1195px;top:9px" width="14" height="11" viewBox="0 0 14 11"><path d="M0.500 3.500Q0.500 2.500 1.500 2.500H3.500L5 0.800H9L10.500 2.500H12Q13 2.500 13 3.500V8.500Q13 9.500 12 9.500H1.500Q0.500 9.500 0.500 8.500Z" fill="#06060c"/><circle cx="10.500" cy="8.300" r="2.300" fill="#1a4a90"/><circle cx="10.500" cy="8.300" r="1" fill="#06060c"/><circle cx="7.500" cy="4" r="0.700" fill="#807020"/></svg><svg style="left:1212px;top:7px" width="17" height="17" viewBox="0 0 17 17"><defs><linearGradient id="scr" x1="0" y1="0" x2="0" y2="1"><stop offset="0" stop-color="#1a1848"/><stop offset="0.550" stop-color="#4a3c70"/><stop offset="1" stop-color="#e8e4f8"/></linearGradient></defs><rect x="6" y="1" width="7" height="8" fill="url(#scr)" stroke="#c8d4f4" stroke-width="0.800"/><rect x="1" y="4" width="7" height="9" fill="url(#scr)" stroke="#c8d4f4" stroke-width="0.800"/><rect x="1" y="13.500" width="8" height="1.500" fill="#e8ecff"/><path d="M9 9L15 15.500M15 9L9 15.500" stroke="#e02020" stroke-width="2"/></svg><svg style="left:1230px;top:7px" width="18" height="17" viewBox="0 0 18 17"><rect x="1" y="4" width="8" height="7" fill="url(#scr)" stroke="#c8d4f4" stroke-width="0.800"/><rect x="0.500" y="11.500" width="9" height="1.800" fill="#f0f0ff"/><path d="M11 7Q12.500 5 11 3M13 8.500Q16 5 13 1.500M15 10Q19.500 5 15 0.500" stroke="#e8f0ff" stroke-width="1.100" fill="none"/><path d="M8 10.500L13.500 16M13.500 10.500L8 16" stroke="#d82020" stroke-width="1.800"/></svg><svg style="left:1249.5px;top:7px" width="13" height="16" viewBox="0 0 13 16"><path d="M6.500 0.500Q9 2.300 12.500 2.500Q12.500 11 6.500 15Q0.500 11 0.500 2.500Q4 2.300 6.500 0.500Z" fill="#d42a2a" stroke="#e8d8d8" stroke-width="0.900"/><path d="M4.300 5L8.700 10M8.700 5L4.300 10" stroke="#fff" stroke-width="1.700"/></svg><svg style="left:1266px;top:7px" width="18" height="18" viewBox="0 0 18 18"><circle cx="7" cy="7" r="6" fill="#3a3a3a"/><circle cx="6.300" cy="6.300" r="4.800" fill="#8c8c88"/><circle cx="5.500" cy="5.300" r="2.600" fill="#d8d4c8"/><circle cx="6" cy="6" r="1.200" fill="#8a6a40"/><path d="M11 13Q14 12 15 9M12 16Q16.500 14.500 17.500 10.500" stroke="#d0e0ff" stroke-width="1.100" fill="none"/></svg><svg style="left:1286px;top:7px" width="13" height="17" viewBox="0 0 13 17"><ellipse cx="6.500" cy="8.500" rx="6" ry="8" fill="#0a1a90"/><path d="M3.500 5.500L9 11L6.500 13.500V3.500L9 6L3.500 11.500" stroke="#e01828" stroke-width="1.300" fill="none"/></svg><span id="clock" style="transform:scaleX(1.0233);left:1308px;top:10px;font-size:11px;color:#fff">8:07 AM</span></div>
</body></html>
